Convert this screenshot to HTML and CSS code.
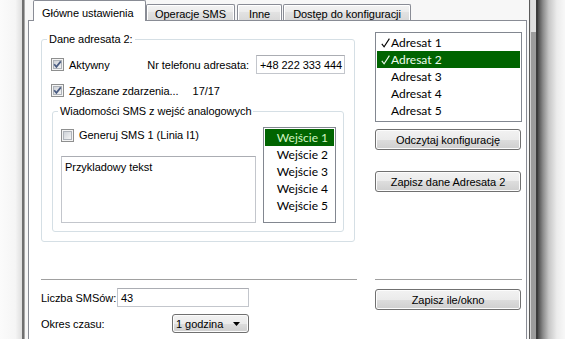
FILE: index.html
```html
<!DOCTYPE html>
<html lang="pl">
<head>
<meta charset="utf-8">
<title>Konfiguracja</title>
<link rel="stylesheet" href="styles.css">
</head>
<body>
<div class="desk">
  <div class="gutter"></div>
  <div class="frame-l"></div>
  <div class="window">
    <div class="tabs">
      <div class="tab active t1">Główne ustawienia</div>
      <div class="tab t2">Operacje SMS</div>
      <div class="tab t3">Inne</div>
      <div class="tab t4">Dostęp do konfiguracji</div>
    </div>
    <div class="pane">
      <div class="top">
        <div class="col-left">
          <fieldset class="group outer">
            <legend>Dane adresata 2:</legend>
            <div class="row r1">
              <span class="check">
                <svg class="cb" width="13" height="13" viewBox="0 0 13 13">
                  <defs><linearGradient id="ga" x1="0" y1="0" x2="1" y2="1"><stop offset="0" stop-color="#cbcfd5"/><stop offset="1" stop-color="#f7f7f7"/></linearGradient></defs>
                  <rect x="0.5" y="0.5" width="12" height="12" fill="#f4f4f4" stroke="#8e8f8f"/>
                  <rect x="2.5" y="2.5" width="8" height="8" fill="url(#ga)" stroke="#aeb3b9"/>
                  <path d="M3.2 6.2 L5.4 8.8 L9.8 3.4" fill="none" stroke="#4a5c82" stroke-width="1.7"/>
                </svg>
                <span>Aktywny</span>
              </span>
              <span class="phone-label">Nr telefonu adresata:</span>
              <span class="input phone">+48 222 333 444</span>
            </div>
            <div class="row r2">
              <span class="check">
                <svg class="cb" width="13" height="13" viewBox="0 0 13 13">
                  <defs><linearGradient id="gb" x1="0" y1="0" x2="1" y2="1"><stop offset="0" stop-color="#cbcfd5"/><stop offset="1" stop-color="#f7f7f7"/></linearGradient></defs>
                  <rect x="0.5" y="0.5" width="12" height="12" fill="#f4f4f4" stroke="#8e8f8f"/>
                  <rect x="2.5" y="2.5" width="8" height="8" fill="url(#gb)" stroke="#aeb3b9"/>
                  <path d="M3.2 6.2 L5.4 8.8 L9.8 3.4" fill="none" stroke="#4a5c82" stroke-width="1.7"/>
                </svg>
                <span>Zgłaszane zdarzenia...</span>
              </span>
              <span class="count">17/17</span>
            </div>
            <fieldset class="group inner">
              <legend>Wiadomości SMS z wejść analogowych</legend>
              <div class="sms">
                <div class="sms-left">
                  <span class="check gen">
                    <svg class="cb" width="13" height="13" viewBox="0 0 13 13">
                      <defs><linearGradient id="gc" x1="0" y1="0" x2="1" y2="1"><stop offset="0" stop-color="#cbcfd5"/><stop offset="1" stop-color="#f7f7f7"/></linearGradient></defs>
                      <rect x="0.5" y="0.5" width="12" height="12" fill="#f4f4f4" stroke="#8e8f8f"/>
                      <rect x="2.5" y="2.5" width="8" height="8" fill="url(#gc)" stroke="#aeb3b9"/>
                    </svg>
                    <span>Generuj SMS 1 (Linia I1)</span>
                  </span>
                  <div class="textarea">Przykladowy tekst</div>
                </div>
                <ul class="list inputs">
                  <li class="sel">Wejście 1</li>
                  <li>Wejście 2</li>
                  <li>Wejście 3</li>
                  <li>Wejście 4</li>
                  <li>Wejście 5</li>
                </ul>
              </div>
            </fieldset>
          </fieldset>
        </div>
        <div class="col-right">
          <ul class="list recipients">
            <li><span class="mark"><svg width="9" height="10" viewBox="0 0 9 10"><path d="M0.8 5.8 L3.1 8.8 L8.4 0.6" fill="none" stroke="currentColor" stroke-width="1.1"/></svg></span>Adresat 1</li>
            <li class="sel"><span class="mark"><svg width="9" height="10" viewBox="0 0 9 10"><path d="M0.8 5.8 L3.1 8.8 L8.4 0.6" fill="none" stroke="currentColor" stroke-width="1.1"/></svg></span>Adresat 2</li>
            <li><span class="mark"></span>Adresat 3</li>
            <li><span class="mark"></span>Adresat 4</li>
            <li><span class="mark"></span>Adresat 5</li>
          </ul>
          <button class="btn b-read">Odczytaj konfigurację</button>
          <button class="btn b-save">Zapisz dane Adresata 2</button>
        </div>
      </div>
      <div class="bottom">
        <div class="col-left sep">
          <div class="frow f1">
            <span>Liczba SMSów:</span>
            <span class="input num">43</span>
          </div>
          <div class="frow f2">
            <span>Okres czasu:</span>
            <span class="combo"><span>1 godzina</span><svg width="7" height="4" viewBox="0 0 7 4"><path d="M0 0 H7 L3.5 4 Z" fill="#000"/></svg></span>
          </div>
        </div>
        <div class="col-right sep">
          <button class="btn b-win">Zapisz ile/okno</button>
        </div>
      </div>
    </div>
  </div>
  <div class="frame-r">
    <div class="fr1"></div>
    <div class="fr2"></div>
    <div class="fr3"></div>
    <div class="fr4"></div>
  </div>
  <div class="shadow"></div>
</div>
</body>
</html>
```
FILE: styles.css
```css
* { box-sizing: border-box; }
html, body { margin: 0; padding: 0; }
body {
  width: 565px;
  height: 339px;
  overflow: hidden;
  font-family: "Liberation Sans", Arial, sans-serif;
  font-size: 11px;
  letter-spacing: -0.05px;
  color: #000;
  background: #fafafa;
}
.desk { display: flex; height: 339px; overflow: hidden; }
.gutter {
  width: 22px;
  flex: none;
  background: linear-gradient(to right, #fbfbfb 0%, #f5f5f5 70%, #dedede 100%);
}
.frame-l {
  width: 3px;
  flex: none;
  border-left: 2px solid #6f6f6f;
  background: #a9a9a9;
}
.window {
  width: 504px;
  flex: none;
  background: #f7f7f7;
  padding: 0 2px 0 3px;
  display: flex;
  flex-direction: column;
}
.tabs {
  height: 20px;
  flex: none;
  display: flex;
  align-items: flex-end;
  padding-left: 5px;
  position: relative;
  z-index: 1;
}
.tab {
  height: 16px;
  padding-top: 2px;
  border: 1px solid #898c95;
  border-bottom: none;
  border-radius: 2px 2px 0 0;
  background: linear-gradient(#f3f3f3, #ebebeb 50%, #e2e2e2 50%, #d9d9d9);
  box-shadow: inset 1px 1px 0 #fff, inset -1px 0 0 #fff;
  display: flex;
  align-items: center;
  justify-content: center;
  white-space: nowrap;
  color: #000;
}
.tab.active {
  height: 21px;
  margin-bottom: -1px;
  padding-top: 3px;
  background: #fff;
  box-shadow: none;
  justify-content: flex-start;
  padding-left: 8px;
}
.t1 { width: 113px; }
.t2 { width: 89px; }
.t3 { width: 45px; margin-left: 2px; }
.t4 { width: 128px; margin-left: 1px; }

.pane {
  height: 330px;
  flex: none;
  border: 1px solid #898c95;
  background: #fff;
}
.top {
  height: 258px;
  display: flex;
  gap: 18px;
  padding-left: 12px;
}
.col-left { width: 316px; flex: none; }
.col-right { width: 147px; flex: none; display: flex; flex-direction: column; align-items: flex-start; }

.group {
  border: 1px solid #d5dfe5;
  border-radius: 3px;
  margin: 0;
  min-width: 0;
}
.group legend {
  line-height: 13px;
  padding: 0 2px;
}
.outer {
  width: 314px;
  margin-top: 12px;
  padding: 9px 10px 9px 10px;
}
.outer > legend { margin-left: -5px; }
.inner {
  margin-top: 5px;
  padding: 9px 7px 8px 8px;
}
.inner > legend { margin-left: -3px; }

.row {
  height: 19px;
  display: flex;
  align-items: center;
  white-space: nowrap;
}
.r2 { margin-top: 7px; }
.check {
  display: flex;
  align-items: center;
  gap: 5px;
  margin-left: -1px;
}
.cb { flex: none; display: block; }
.phone-label { margin-left: auto; }
.input {
  display: flex;
  align-items: center;
  height: 19px;
  border: 1px solid #c3c6cc;
  border-top-color: #abadb3;
  background: #fff;
  padding-left: 3px;
}
.phone { width: 89px; margin-left: 7px; margin-right: -1px; }
.count { margin-left: 14px; }

.sms { display: flex; gap: 7px; }
.sms-left { width: 195px; flex: none; }
.gen { height: 16px; margin-left: 0; }
.textarea {
  margin-top: 13px;
  height: 67px;
  border: 1px solid #c3c6cc;
  border-top-color: #abadb3;
  padding: 4px 3px;
  line-height: 13px;
}

.list {
  list-style: none;
  margin: 0;
  padding: 1px;
  border: 1px solid #828790;
  background: #fff;
  font-family: Lato, "Liberation Sans", sans-serif;
  font-size: 12px;
  letter-spacing: 0;
}
.list li {
  height: 17px;
  line-height: 17px;
  white-space: nowrap;
}
.inputs { width: 73px; height: 96px; flex: none; }
.inputs li { text-align: right; padding-right: 6px; }
.inputs li.sel { background: #006400; color: #d2f5c2; }

.recipients { width: 147px; height: 90px; margin-top: 11px; }
.recipients li { display: flex; align-items: center; padding-left: 4px; }
.recipients li.sel { background: #006400; color: #eefcee; }
.mark { width: 10px; flex: none; display: flex; align-items: center; }
.mark svg { display: block; }

.btn {
  width: 146px;
  height: 21px;
  padding: 0;
  border: 1px solid #707070;
  border-radius: 3px;
  background: linear-gradient(#f2f2f2, #ebebeb 50%, #dddddd 50%, #cfcfcf);
  box-shadow: inset 0 0 0 1px #fcfcfc;
  font-family: "Liberation Sans", Arial, sans-serif;
  font-size: 11px;
  letter-spacing: -0.05px;
  color: #000;
}
.b-read { margin-top: 7px; }
.b-save { margin-top: 21px; }
.b-win { margin-top: 9px; }

.bottom {
  display: flex;
  gap: 18px;
  padding-left: 12px;
}
.sep { border-top: 1px solid #a0a0a0; }
.frow {
  width: 208px;
  height: 19px;
  display: flex;
  align-items: center;
  justify-content: space-between;
}
.f1 { margin-top: 8px; }
.f2 { margin-top: 7px; }
.num { width: 132px; }
.combo {
  width: 77px;
  height: 19px;
  border: 1px solid #707070;
  border-radius: 3px;
  background: linear-gradient(#f2f2f2, #ebebeb 50%, #dddddd 50%, #cfcfcf);
  box-shadow: inset 0 0 0 1px #fcfcfc;
  display: flex;
  align-items: center;
  justify-content: space-between;
  padding: 0 8px 0 3px;
}
.combo svg { display: block; }

.frame-r { width: 9px; flex: none; display: flex; }
.fr1 { width: 1px; background: #5a5a5a; }
.fr2 { width: 1px; background: #d4d4d4; }
.fr3 { width: 5px; background: linear-gradient(#e0e0e0 0, #e0e0e0 32px, #9c9c9c 32px); }
.fr4 { width: 2px; background: #3c3c3c; }
.shadow {
  width: 27px;
  flex: none;
  background: linear-gradient(to right, #4a4a4a 0%, #8a8a8a 18%, #c6c6c6 40%, #ececec 70%, #f8f8f8 100%);
}
```
